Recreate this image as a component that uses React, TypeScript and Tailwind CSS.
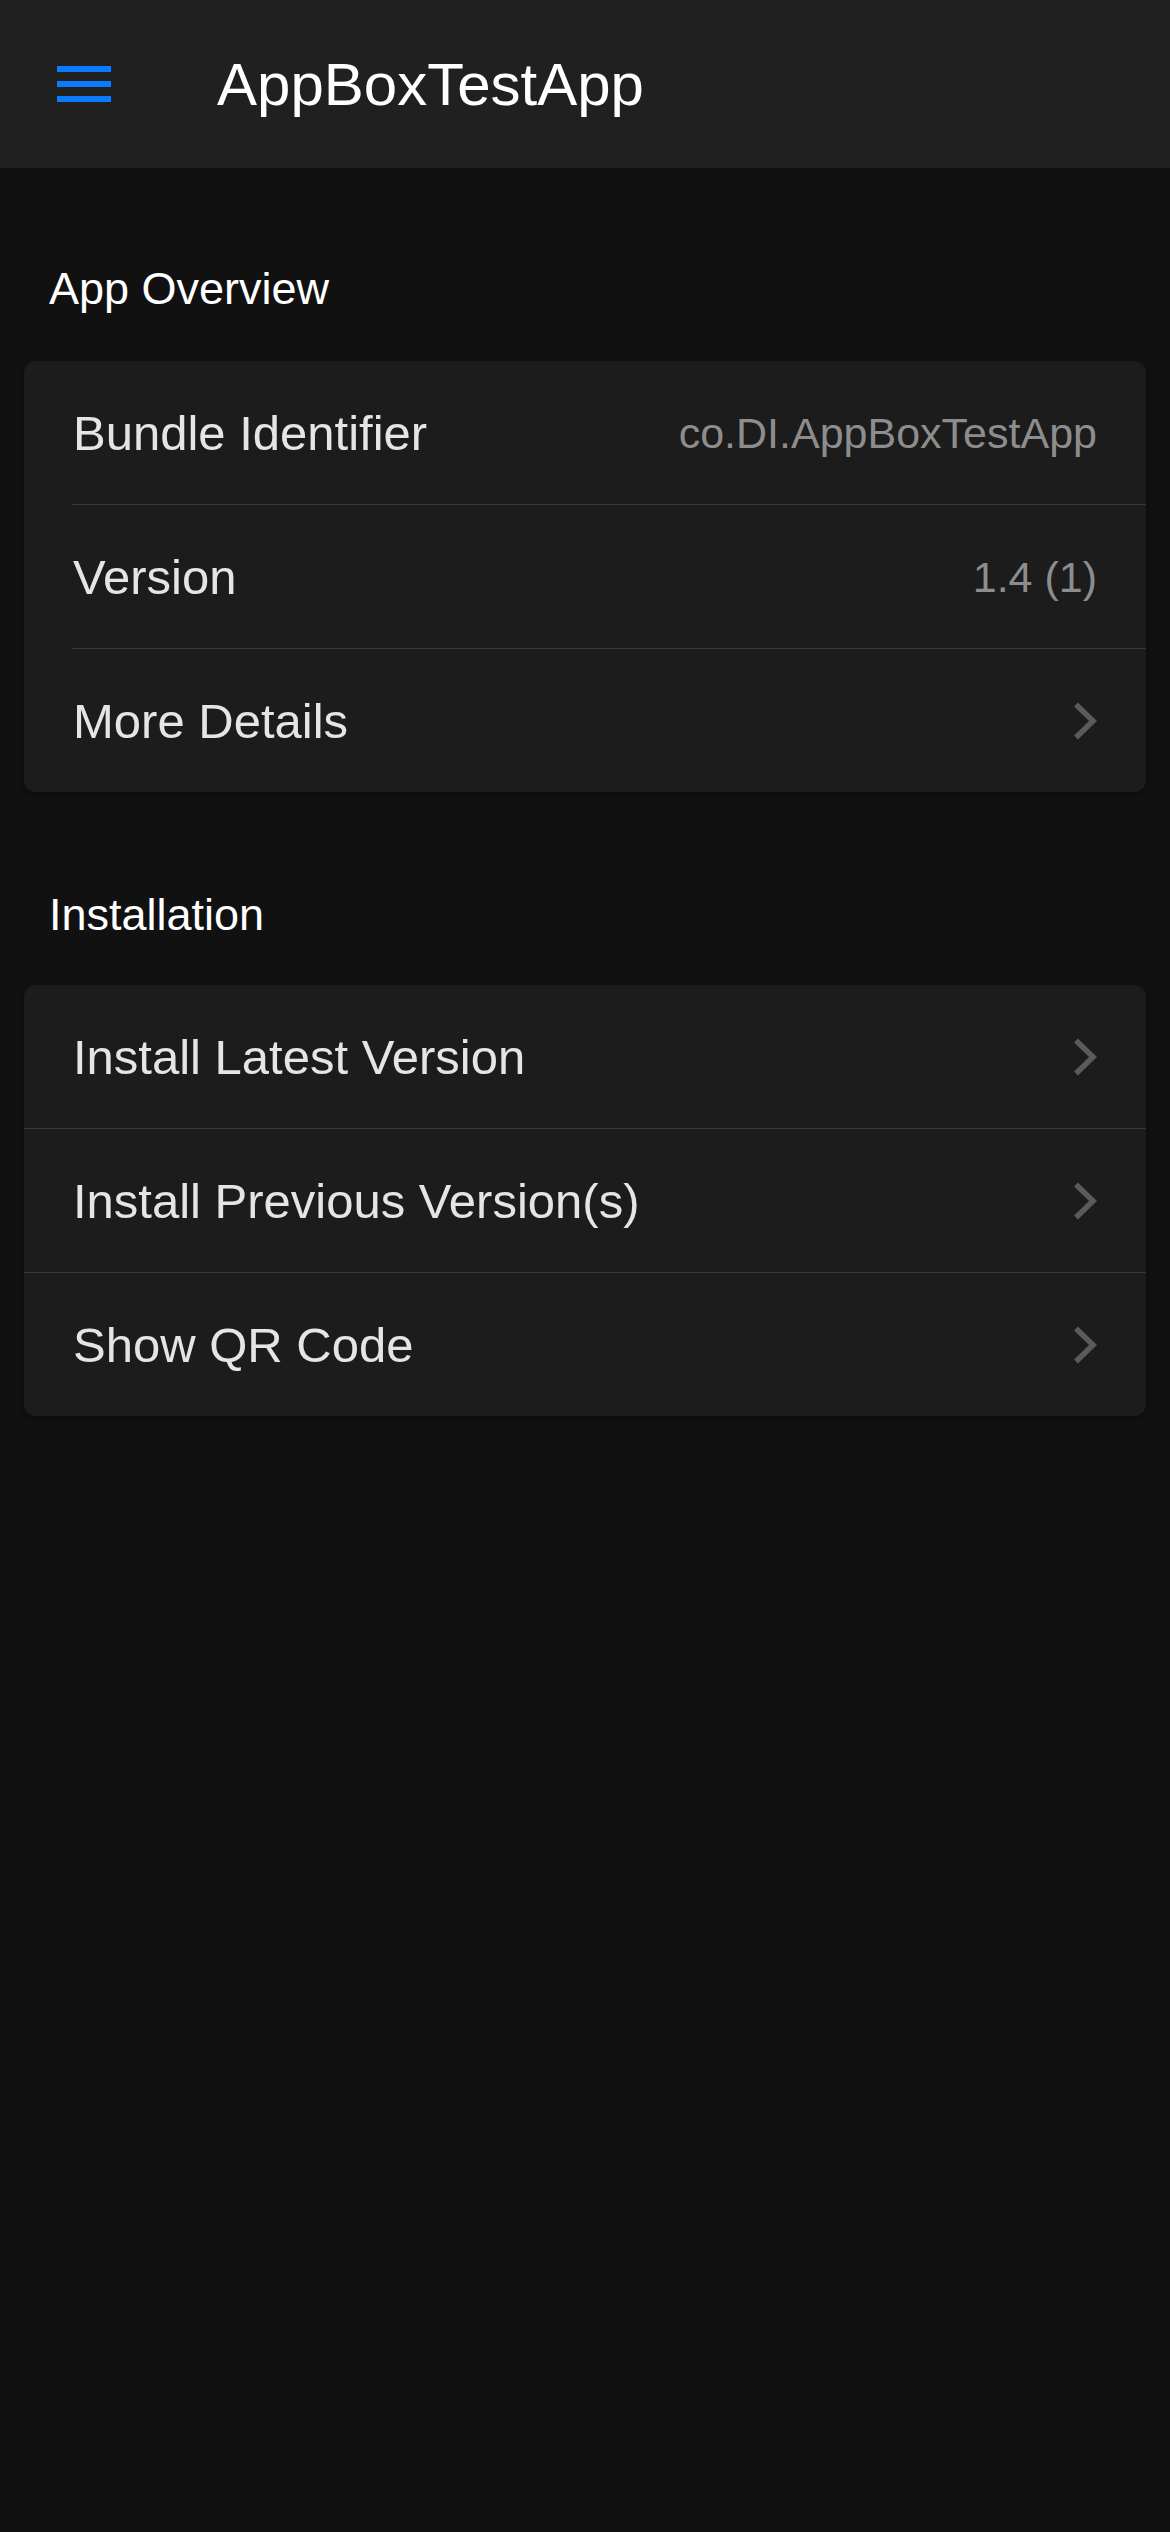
import React from "react";

const font = { fontFamily: '"Liberation Sans", Arial, sans-serif' };

function Chevron() {
  return (
    <svg width="24" height="38" viewBox="0 0 24 38" className="shrink-0">
      <polyline
        points="3,2.5 20,19 3,35.5"
        fill="none"
        stroke="#5b5b5b"
        strokeWidth="5.5"
        strokeLinejoin="miter"
        strokeLinecap="butt"
      />
    </svg>
  );
}

function Row({ label, value, chevron }: { label: string; value?: string; chevron?: boolean }) {
  return (
    <div className="h-[143px] flex items-center justify-between pl-[49px] pr-[49px]">
      <span className="text-[49px] leading-none text-[#e5e5e5] mt-[2px]">{label}</span>
      {value && <span className="text-[43px] leading-none text-[#8d8d8d] mt-[2px]">{value}</span>}
      {chevron && <Chevron />}
    </div>
  );
}

export default function App() {
  return (
    <div className="min-h-[2532px] w-full bg-[#111111]" style={font}>
      <header className="h-[168px] bg-[#202020] flex items-center pl-[57px]">
        <div className="w-[54px] flex flex-col gap-[9px]">
          <div className="h-[6px] bg-[#0a7aff]" />
          <div className="h-[6px] bg-[#0a7aff]" />
          <div className="h-[6px] bg-[#0a7aff]" />
        </div>
        <h1 className="ml-[106px] text-[60px] leading-none text-white mt-[2px]">AppBoxTestApp</h1>
      </header>

      <main className="px-[24px] pt-[98px]">
        <h2 className="pl-[25px] text-[45px] leading-none text-white font-medium">App Overview</h2>
        <div className="mt-[50px] rounded-[12px] bg-[#1c1c1c] shadow-[0_2px_4px_rgba(0,0,0,0.4)]">
          <Row label="Bundle Identifier" value="co.DI.AppBoxTestApp" />
          <div className="ml-[48px] h-px bg-[#383838]" />
          <Row label="Version" value="1.4 (1)" />
          <div className="ml-[48px] h-px bg-[#383838]" />
          <Row label="More Details" chevron />
        </div>

        <h2 className="mt-[100px] pl-[25px] text-[45px] leading-none text-white font-medium">Installation</h2>
        <div className="mt-[48px] rounded-[12px] bg-[#1c1c1c] shadow-[0_2px_4px_rgba(0,0,0,0.4)]">
          <Row label="Install Latest Version" chevron />
          <div className="h-px bg-[#383838]" />
          <Row label="Install Previous Version(s)" chevron />
          <div className="h-px bg-[#383838]" />
          <Row label="Show QR Code" chevron />
        </div>
      </main>
    </div>
  );
}
